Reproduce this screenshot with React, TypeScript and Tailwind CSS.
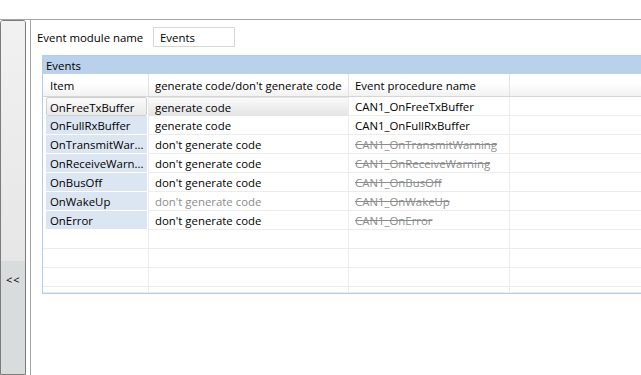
import React from 'react';

type Row = {
  item: string;
  gen: string;
  proc: string;
  genDisabled?: boolean;
  procDisabled?: boolean;
  selected?: boolean;
};

const rows: Row[] = [
  { item: 'OnFreeTxBuffer', gen: 'generate code', proc: 'CAN1_OnFreeTxBuffer', selected: true },
  { item: 'OnFullRxBuffer', gen: 'generate code', proc: 'CAN1_OnFullRxBuffer' },
  { item: 'OnTransmitWar...', gen: "don't generate code", proc: 'CAN1_OnTransmitWarning', procDisabled: true },
  { item: 'OnReceiveWarn...', gen: "don't generate code", proc: 'CAN1_OnReceiveWarning', procDisabled: true },
  { item: 'OnBusOff', gen: "don't generate code", proc: 'CAN1_OnBusOff', procDisabled: true },
  { item: 'OnWakeUp', gen: "don't generate code", proc: 'CAN1_OnWakeUp', genDisabled: true, procDisabled: true },
  { item: 'OnError', gen: "don't generate code", proc: 'CAN1_OnError', procDisabled: true },
];

function DataRow({ row }: { row: Row }) {
  return (
    <div className="flex h-[19px] whitespace-nowrap">
      <div className="w-[105px] shrink-0 pl-[3px] pr-px">
        {row.selected ? (
          <div className="h-[19px] rounded-[2px] border border-[#cfcfcf] bg-gradient-to-b from-[#fbfbfb] to-[#e9e9e9] pl-[3px] pt-px leading-[17px]">
            {row.item}
          </div>
        ) : (
          <div className="h-[19px] bg-[#dce6f2] border-b border-white pl-[4px] pt-[2px] leading-[16px]">{row.item}</div>
        )}
      </div>
      <div
        className={
          row.selected
            ? 'w-[200px] shrink-0 border-l border-[#ececec] border-t border-t-[#e2e2e2] bg-gradient-to-b from-[#fafafa] to-[#e4e4e4] pl-[6px] pt-px leading-[17px]'
            : 'w-[200px] shrink-0 border-l border-b border-[#ececec] pl-[6px] pt-[2px] leading-[16px]'
        }
      >
        <span className={row.genDisabled ? 'text-[#8c8c8c]' : ''}>{row.gen}</span>
      </div>
      <div className="w-[161px] shrink-0 border-l border-b border-[#ececec] pl-[6px] pt-[2px] leading-[16px]">
        <span className={row.procDisabled ? 'text-[#8c8c8c] line-through' : ''}>{row.proc}</span>
      </div>
      <div className="flex-1 border-l border-b border-[#ececec]" />
    </div>
  );
}

function EmptyRow({ h = 19 }: { h?: number }) {
  return (
    <div className="flex" style={{ height: h }}>
      <div className="w-[105px] shrink-0 border-b border-[#ececec]" />
      <div className="w-[200px] shrink-0 border-l border-b border-[#ececec]" />
      <div className="w-[161px] shrink-0 border-l border-b border-[#ececec]" />
      <div className="flex-1 border-l border-b border-[#ececec]" />
    </div>
  );
}

export default function App() {
  return (
    <div className="w-[641px] h-[375px] overflow-hidden bg-white text-black text-[11.4px] font-['Open_Sans',sans-serif] whitespace-nowrap">
      <div className="h-[20px] border-b border-[#a3a3a3]" />
      <div className="flex h-[355px]">
        {/* collapsed side panel */}
        <div className="w-[26px] shrink-0 flex flex-col rounded-t-[3px] border border-[#7c7c7c] overflow-hidden">
          <div className="h-[240px] bg-gradient-to-b from-[#f1f1f1] to-[#e6e6e6]" />
          <div className="flex-1 bg-[#d9dcdc] pt-[12px] pl-[5px] text-[11px] leading-[14px] tracking-[1px]">
            &lt;&lt;
          </div>
        </div>
        <div className="w-[4px] shrink-0" />
        <div className="w-px shrink-0 bg-[#a3a3a3]" />

        <div className="flex-1 min-w-0">
          <div className="flex items-center h-[20px] mt-[7px] pl-[6px]">
            <span className="w-[116px] shrink-0 pt-px">Event module name</span>
            <div className="w-[82px] h-[20px] border border-[#d6d6d6] pl-[6px] pt-px leading-[17px]">Events</div>
          </div>

          <div className="ml-[11px] mt-[8px] w-[640px] border border-[#b5cde6]">
            <div className="h-[18px] bg-[#b9d1ea] pl-[3px] pt-px leading-[17px]">Events</div>
            <div className="flex h-[23px] border-b border-[#d5d5d5] bg-gradient-to-b from-white from-40% to-[#f2f2f2]">
              <div className="w-[105px] shrink-0 pl-[7px] pt-[2px] leading-[20px]">Item</div>
              <div className="w-[200px] shrink-0 border-l border-[#e3e3e3] pl-[6px] pt-[2px] leading-[20px]">
                generate code/don't generate code
              </div>
              <div className="w-[161px] shrink-0 border-l border-[#e3e3e3] pl-[6px] pt-[2px] leading-[20px]">
                Event procedure name
              </div>
              <div className="flex-1 border-l border-[#e3e3e3]" />
            </div>
            {rows.map((r) => (
              <DataRow key={r.item} row={r} />
            ))}
            <EmptyRow />
            <EmptyRow />
            <EmptyRow />
            <EmptyRow h={6} />
          </div>
        </div>
      </div>
    </div>
  );
}
